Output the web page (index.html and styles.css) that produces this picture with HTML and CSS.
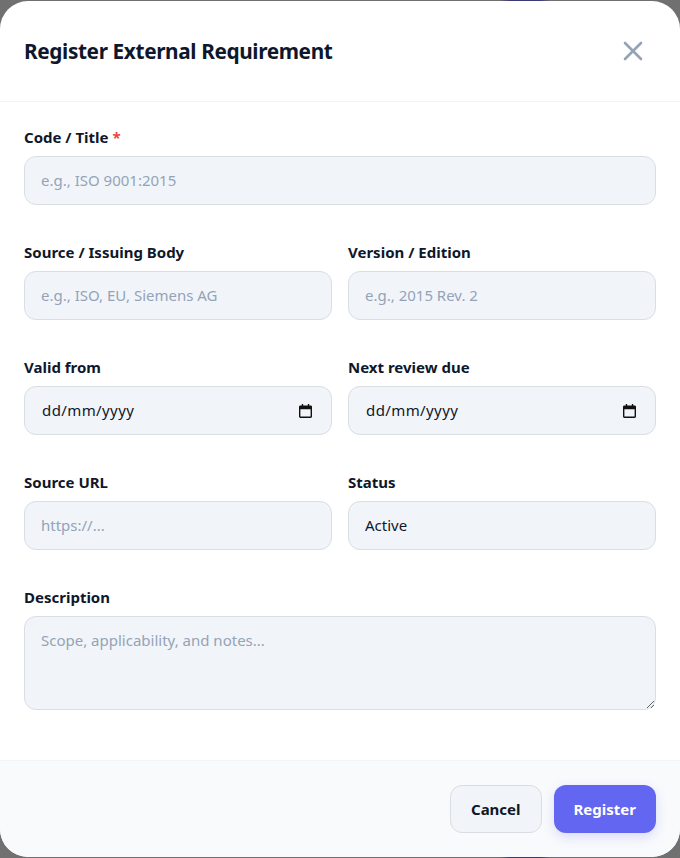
FILE: index.html
```html
<!DOCTYPE html>
<html lang="en-GB">
<head>
    <meta charset="UTF-8">
    <title>Register External Requirement</title>
    <link rel="stylesheet" href="styles.css">
</head>
<body>
    <div class="overlay">
        <div class="modal">
            <div class="modal-header">
                <h2 class="modal-title">Register External Requirement</h2>
                <button class="close-btn" type="button" aria-label="Close">
                    <svg width="24" height="24" viewBox="0 0 24 24" fill="none" stroke="#94a3b8" stroke-width="2.6" stroke-linecap="round">
                        <path d="M4 4L20 20"/>
                        <path d="M20 4L4 20"/>
                    </svg>
                </button>
            </div>
            <form class="modal-body">
                <div class="form-group">
                    <label class="form-label">Code / Title <span class="required">*</span></label>
                    <input class="form-input" type="text" placeholder="e.g., ISO 9001:2015">
                </div>
                <div class="form-row">
                    <div class="form-group">
                        <label class="form-label">Source / Issuing Body</label>
                        <input class="form-input" type="text" placeholder="e.g., ISO, EU, Siemens AG">
                    </div>
                    <div class="form-group">
                        <label class="form-label">Version / Edition</label>
                        <input class="form-input" type="text" placeholder="e.g., 2015 Rev. 2">
                    </div>
                </div>
                <div class="form-row">
                    <div class="form-group">
                        <label class="form-label">Valid from</label>
                        <div class="form-input date-input">
                            <span class="date-text">dd/mm/yyyy</span>
                            <svg class="date-icon" width="13" height="14" viewBox="0 0 14 15">
                                <path fill-rule="evenodd" d="M3 0h1.5v1.5h5V0H11v1.5h1.5A1.5 1.5 0 0 1 14 3v10.5a1.5 1.5 0 0 1-1.5 1.5h-11A1.5 1.5 0 0 1 0 13.5V3a1.5 1.5 0 0 1 1.5-1.5H3zM1.5 5.5v8h11v-8z"/>
                            </svg>
                        </div>
                    </div>
                    <div class="form-group">
                        <label class="form-label">Next review due</label>
                        <div class="form-input date-input">
                            <span class="date-text">dd/mm/yyyy</span>
                            <svg class="date-icon" width="13" height="14" viewBox="0 0 14 15">
                                <path fill-rule="evenodd" d="M3 0h1.5v1.5h5V0H11v1.5h1.5A1.5 1.5 0 0 1 14 3v10.5a1.5 1.5 0 0 1-1.5 1.5h-11A1.5 1.5 0 0 1 0 13.5V3a1.5 1.5 0 0 1 1.5-1.5H3zM1.5 5.5v8h11v-8z"/>
                            </svg>
                        </div>
                    </div>
                </div>
                <div class="form-row">
                    <div class="form-group">
                        <label class="form-label">Source URL</label>
                        <input class="form-input" type="text" placeholder="https://...">
                    </div>
                    <div class="form-group">
                        <label class="form-label">Status</label>
                        <select class="form-input form-select">
                            <option>Active</option>
                            <option>Draft</option>
                            <option>Superseded</option>
                        </select>
                    </div>
                </div>
                <div class="form-group">
                    <label class="form-label">Description</label>
                    <textarea class="form-input form-textarea" placeholder="Scope, applicability, and notes..."></textarea>
                </div>
            </form>
            <div class="modal-footer">
                <button class="btn btn-cancel" type="button">Cancel</button>
                <button class="btn btn-primary" type="button">Register</button>
            </div>
        </div>
    </div>
</body>
</html>
```

FILE: styles.css
```css
* {
    box-sizing: border-box;
}
html,
body {
    margin: 0;
    padding: 0;
    height: 100%;
    overflow: hidden;
}
body {
    font-family: "Noto Sans", sans-serif;
    color: #0f172a;
    background: #707070;
}
.overlay {
    height: 858px;
    padding: 1px 0;
    background: linear-gradient(90deg, #707070 500px, #3b3a78 510px, #3b3a78 540px, #707070 550px);
}
.modal {
    height: 856px;
    display: flex;
    flex-direction: column;
    background: #ffffff;
    border-radius: 28px;
    overflow: hidden;
}
.modal-header {
    height: 101px;
    padding: 0 24px;
    display: flex;
    align-items: center;
    justify-content: space-between;
    border-bottom: 1px solid #f1f5f9;
}
.modal-title {
    margin: 0 0 1px;
    font-size: 20.8px;
    font-weight: 700;
    line-height: 28px;
    letter-spacing: -0.38px;
}
.close-btn {
    width: 24px;
    height: 24px;
    margin-right: 11px;
    padding: 0;
    border: none;
    background: none;
    display: flex;
}
.modal-body {
    flex: 1;
    padding: 25px 24px 0;
    display: flex;
    flex-direction: column;
    gap: 37px;
}
.form-row {
    display: grid;
    grid-template-columns: 1fr 1fr;
    gap: 16px;
}
.form-group {
    display: flex;
    flex-direction: column;
    gap: 8px;
}
.form-label {
    font-size: 15px;
    font-weight: 700;
    line-height: 21px;
    color: #0f172a;
}
.required {
    color: #ef4444;
}
.form-input {
    width: 100%;
    height: 49px;
    padding: 11px 16px 13px;
    font-family: inherit;
    font-size: 15px;
    color: #0f172a;
    background: #f1f5f9;
    border: 1px solid #d9dde4;
    border-radius: 12px;
    outline: none;
}
.form-input::placeholder {
    color: #94a3b8;
}
.form-select {
    appearance: none;
}
.form-textarea {
    height: 94px;
    padding-top: 12px;
    display: block;
    line-height: 22px;
    resize: vertical;
}
.date-input {
    display: flex;
    align-items: center;
    justify-content: space-between;
    padding: 0 19px 0 17px;
    letter-spacing: 0.4px;
}
.date-text {
    margin-bottom: 2px;
}
.date-icon {
    fill: #111111;
}
.modal-footer {
    height: 97px;
    padding: 24px;
    display: flex;
    justify-content: flex-end;
    gap: 12px;
    background: #f8fafc;
    border-top: 1px solid #f1f5f9;
}
.btn {
    height: 48px;
    padding: 0 20px;
    font-family: inherit;
    font-size: 15px;
    font-weight: 700;
    border-radius: 12px;
}
.btn-cancel {
    color: #0f172a;
    background: #f1f5f9;
    border: 1px solid #d9dde4;
}
.btn-primary {
    color: #ffffff;
    background: #6366f1;
    border: none;
    box-shadow: 0 4px 12px rgba(99, 102, 241, 0.2);
}
```
